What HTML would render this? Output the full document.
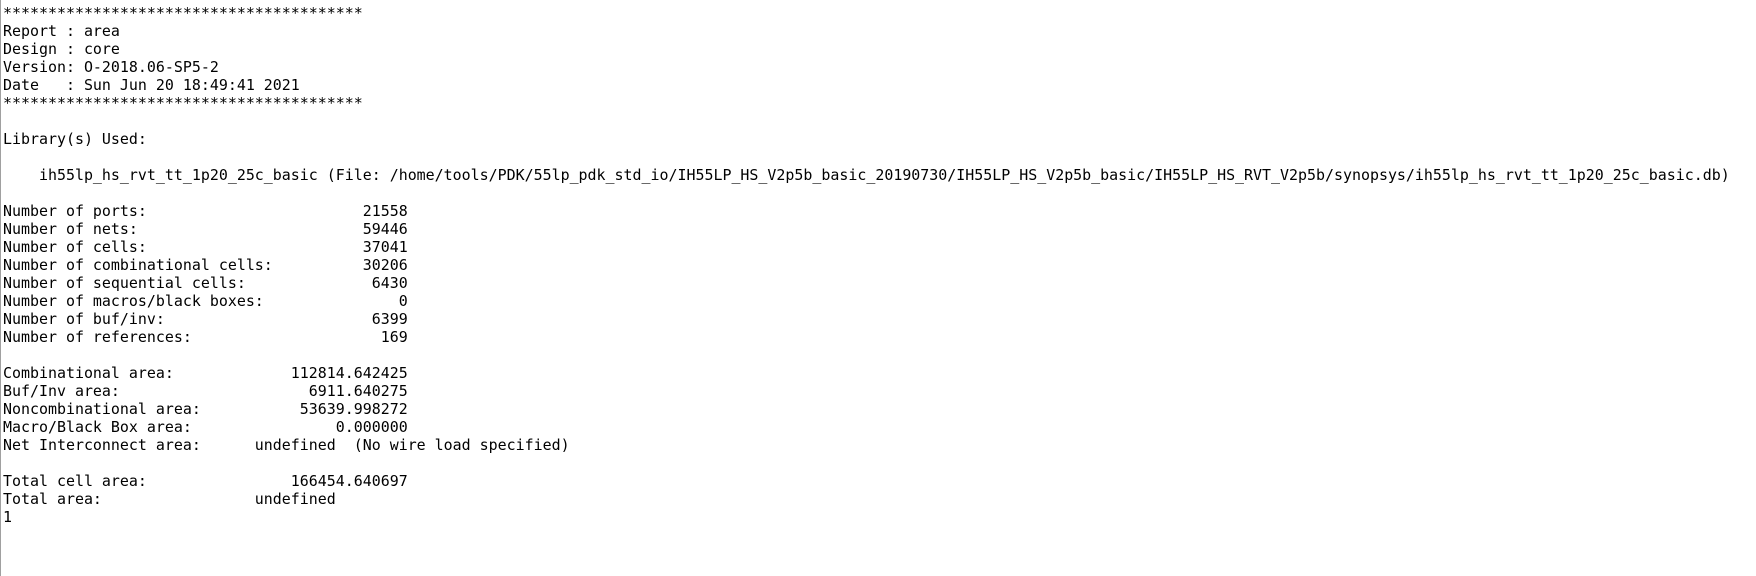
<!DOCTYPE html>
<html><head><meta charset="utf-8"><style>
html,body{margin:0;padding:0;background:#fff;width:1756px;height:576px;overflow:hidden;}
.bar{position:absolute;left:0;top:0;width:1px;height:576px;background:#a0a0a0;}
pre{position:absolute;left:3px;top:4px;margin:0;font-family:"DejaVu Sans Mono","Liberation Mono",monospace;font-size:14.95px;line-height:18px;color:#000;}
</style></head><body><div class="bar"></div><pre>****************************************
Report : area
Design : core
Version: O-2018.06-SP5-2
Date   : Sun Jun 20 18:49:41 2021
****************************************

Library(s) Used:

    ih55lp_hs_rvt_tt_1p20_25c_basic (File: /home/tools/PDK/55lp_pdk_std_io/IH55LP_HS_V2p5b_basic_20190730/IH55LP_HS_V2p5b_basic/IH55LP_HS_RVT_V2p5b/synopsys/ih55lp_hs_rvt_tt_1p20_25c_basic.db)

Number of ports:                        21558
Number of nets:                         59446
Number of cells:                        37041
Number of combinational cells:          30206
Number of sequential cells:              6430
Number of macros/black boxes:               0
Number of buf/inv:                       6399
Number of references:                     169

Combinational area:             112814.642425
Buf/Inv area:                     6911.640275
Noncombinational area:           53639.998272
Macro/Black Box area:                0.000000
Net Interconnect area:      undefined  (No wire load specified)

Total cell area:                166454.640697
Total area:                 undefined
1</pre></body></html>
